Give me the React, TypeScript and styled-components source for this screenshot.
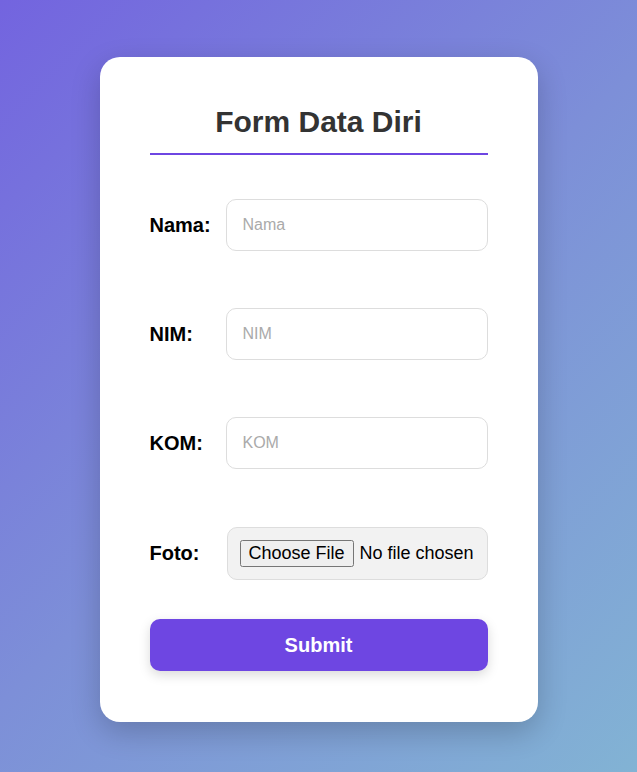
import React from "react";
import styled, { createGlobalStyle } from "styled-components";

const GlobalStyle = createGlobalStyle`
  * {
    box-sizing: border-box;
  }
  body {
    margin: 0;
    font-family: "Liberation Sans", Arial, sans-serif;
  }
`;

const Page = styled.div`
  min-height: 100vh;
  display: flex;
  justify-content: center;
  align-items: flex-start;
  padding-top: 57px;
  background: linear-gradient(135deg, #7364df 0%, #7d8fd8 50%, #82b3d4 100%);
`;

const Card = styled.div`
  width: 438px;
  background: #fff;
  border-radius: 20px;
  padding: 48px 50px 51px;
  box-shadow: 0 10px 30px rgba(0, 0, 0, 0.2);
`;

const Title = styled.h2`
  margin: 0 0 44px;
  padding-bottom: 14px;
  text-align: center;
  font-size: 30px;
  font-weight: 700;
  color: #333;
  border-bottom: 2px solid #6e46e2;
`;

const Form = styled.form`
  display: flex;
  flex-direction: column;
`;

const Row = styled.div<{ $gap: number }>`
  display: grid;
  grid-template-columns: 76px 1fr;
  align-items: center;
  margin-bottom: ${(p) => p.$gap}px;
`;

const Label = styled.label`
  font-size: 20px;
  font-weight: 700;
  color: #000;
`;

const TextInput = styled.input`
  width: 100%;
  height: 52px;
  padding: 0 16px;
  border: 1px solid #ddd;
  border-radius: 10px;
  font-family: "Liberation Sans", Arial, sans-serif;
  font-size: 16px;
  color: #333;
  outline: none;

  &::placeholder {
    color: #aaa;
  }
`;

const FileInput = styled.input`
  width: calc(100% - 1px);
  margin-left: 1px;
  padding: 12px 4px 12px 12px;
  border: 1px solid #ddd;
  border-radius: 10px;
  background: #f2f2f2;
  font-family: "Liberation Sans", Arial, sans-serif;
  font-size: 18px;
  color: #000;

  &::file-selector-button {
    padding: 1px 7px;
    margin-right: 6px;
    font-family: inherit;
    font-size: inherit;
  }
`;

const Submit = styled.button`
  height: 52px;
  border: none;
  border-radius: 10px;
  background: #6e46e2;
  color: #fff;
  font-family: "Liberation Sans", Arial, sans-serif;
  font-size: 20px;
  font-weight: 700;
  box-shadow: 0 4px 12px rgba(0, 0, 0, 0.15);
  cursor: pointer;
`;

const fields = [
  { id: "nama", label: "Nama:", placeholder: "Nama" },
  { id: "nim", label: "NIM:", placeholder: "NIM" },
  { id: "kom", label: "KOM:", placeholder: "KOM" },
];

export default function App(): JSX.Element {
  return (
    <>
      <GlobalStyle />
      <Page>
        <Card>
          <Title>Form Data Diri</Title>
          <Form onSubmit={(e) => e.preventDefault()}>
            {fields.map((f, i) => (
              <Row key={f.id} $gap={i === fields.length - 1 ? 58 : 57}>
                <Label htmlFor={f.id}>{f.label}</Label>
                <TextInput id={f.id} type="text" placeholder={f.placeholder} />
              </Row>
            ))}
            <Row $gap={39}>
              <Label htmlFor="foto">Foto:</Label>
              <FileInput id="foto" type="file" accept="image/*" />
            </Row>
            <Submit type="submit">Submit</Submit>
          </Form>
        </Card>
      </Page>
    </>
  );
}
